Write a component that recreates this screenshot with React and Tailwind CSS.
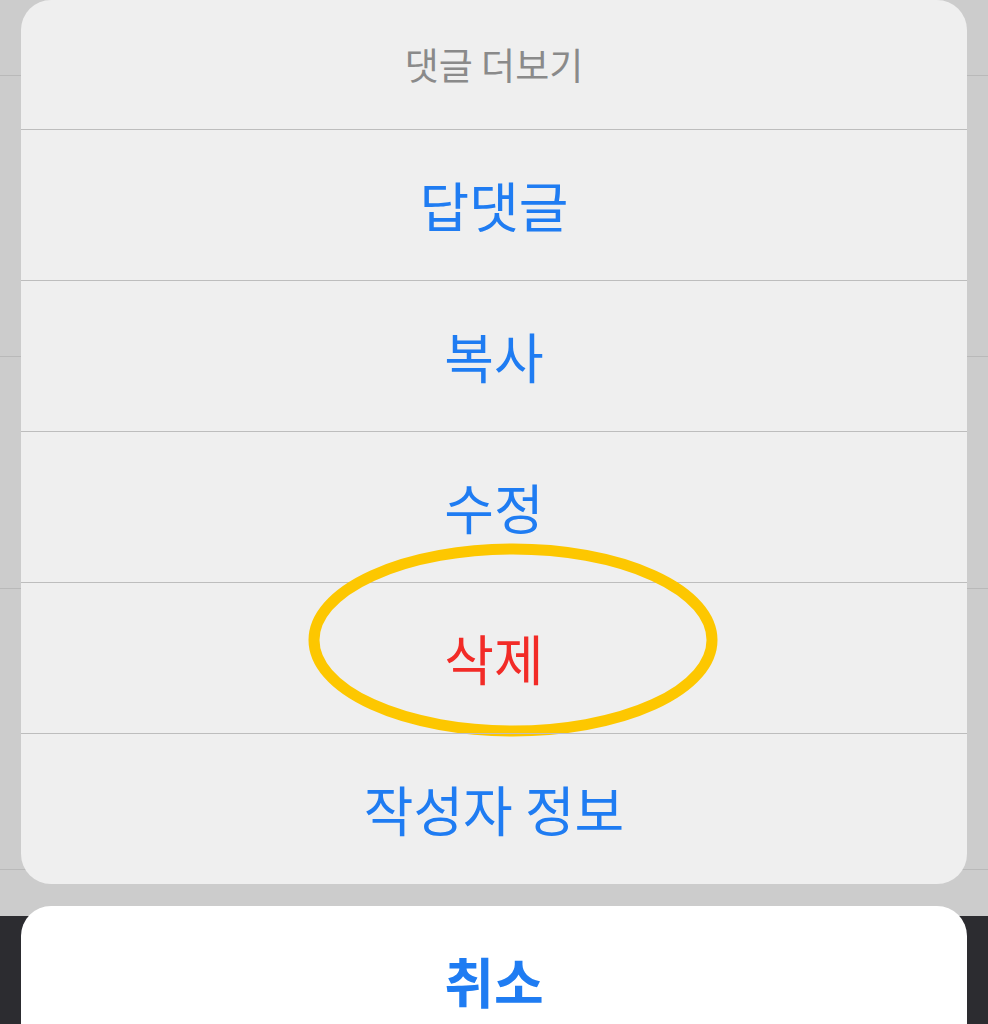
import React from 'react';

const font = { fontFamily: '"Noto Sans CJK KR", "Noto Sans", sans-serif' };

const actions = [
  { label: '답댓글', tone: 'text-[#1f7cf2]' },
  { label: '복사', tone: 'text-[#1f7cf2]' },
  { label: '수정', tone: 'text-[#1f7cf2]' },
  { label: '삭제', tone: 'text-[#f22b27]', marked: true },
  { label: '작성자 정보', tone: 'text-[#1f7cf2]' },
];

// yellow marker drawn over the delete row
const Highlight = () => (
  <svg
    className="absolute left-[282px] top-[-43px] pointer-events-none"
    width="420"
    height="200"
    viewBox="0 0 420 200"
  >
    <ellipse cx="210" cy="100" rx="199" ry="91" fill="none" stroke="#fdc700" strokeWidth="11" />
  </svg>
);

export default function App() {
  return (
    <div className="relative w-[988px] h-[1024px] overflow-hidden bg-[#cccccc] select-none" style={font}>
      {/* dimmed page behind the sheet */}
      <div className="flex flex-col h-full">
        <div className="h-[76px] shrink-0 border-b border-[#b9b9b9]" />
        <div className="h-[281px] shrink-0 border-b border-[#b9b9b9]" />
        <div className="h-[232px] shrink-0 border-b border-[#b9b9b9]" />
        <div className="h-[281px] shrink-0 border-b border-[#b9b9b9]" />
        <div className="h-[46px] shrink-0" />
        <div className="flex-1 bg-[#2c2c30]" />
      </div>

      {/* action sheet */}
      <div className="absolute inset-0 flex flex-col px-[21px]">
        <div className="shrink-0 rounded-[30px] bg-[#efefef] overflow-hidden">
          <div className="h-[129px] flex items-center justify-center">
            <span className="text-[37px] leading-none text-[#8a8a8a]">댓글 더보기</span>
          </div>
          {actions.map((a) => (
            <div key={a.label} className="relative h-[151px] border-t border-[#bdbdbd] flex items-center justify-center">
              <span className={`text-[54px] leading-none ${a.tone}`}>{a.label}</span>
              {a.marked && <Highlight />}
            </div>
          ))}
        </div>
        <div className="mt-[22px] h-[150px] shrink-0 rounded-[30px] bg-white flex items-center justify-center">
          <span className="text-[54px] leading-none font-bold text-[#1f7cf2]">취소</span>
        </div>
      </div>
    </div>
  );
}
